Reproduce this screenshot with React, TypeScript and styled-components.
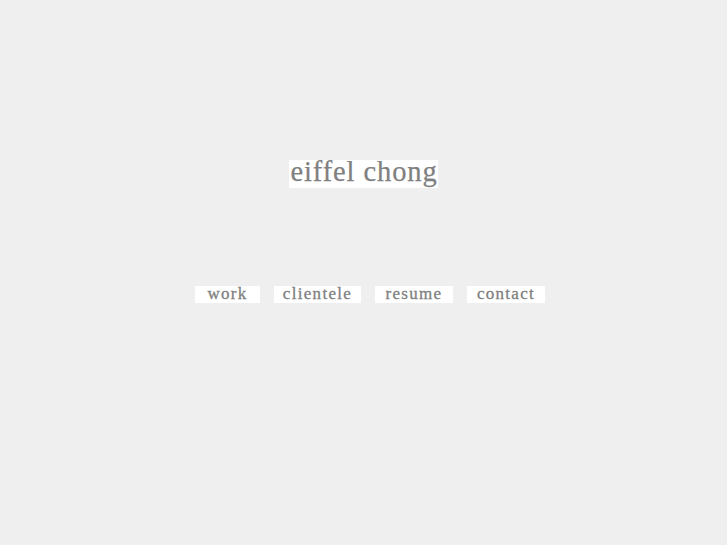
import React from 'react';
import styled, { createGlobalStyle } from 'styled-components';

const GlobalStyle = createGlobalStyle`
  html, body {
    margin: 0;
    padding: 0;
    background: #efefef;
  }
`;

const Page = styled.div`
  display: flex;
  flex-direction: column;
  align-items: center;
  padding-top: 160px;
  font-family: 'Liberation Serif', 'Times New Roman', serif;
  color: #808080;
`;

const Title = styled.h1`
  margin: 0;
  background: #fff;
  font-size: 28.5px;
  font-weight: normal;
  line-height: 24px;
  letter-spacing: 0.9px;
  padding: 0 0 4px 1px;
  -webkit-text-stroke: 0.25px #808080;
`;

const Nav = styled.nav`
  display: flex;
  gap: 14px;
  margin-top: 98px;
  padding-left: 13px;
`;

const NavItem = styled.a<{ w: number }>`
  display: block;
  width: ${({ w }) => w}px;
  background: #fff;
  font-size: 17px;
  line-height: 16px;
  height: 17px;
  letter-spacing: 1.3px;
  text-align: center;
  color: #808080;
  text-decoration: none;
  -webkit-text-stroke: 0.3px #808080;
`;

const items = [
  { label: 'work', w: 65 },
  { label: 'clientele', w: 87 },
  { label: 'resume', w: 78 },
  { label: 'contact', w: 78 },
];

export default function App() {
  return (
    <>
      <GlobalStyle />
      <Page>
        <Title>eiffel chong</Title>
        <Nav>
          {items.map((item) => (
            <NavItem key={item.label} href="#" w={item.w}>
              {item.label}
            </NavItem>
          ))}
        </Nav>
      </Page>
    </>
  );
}
